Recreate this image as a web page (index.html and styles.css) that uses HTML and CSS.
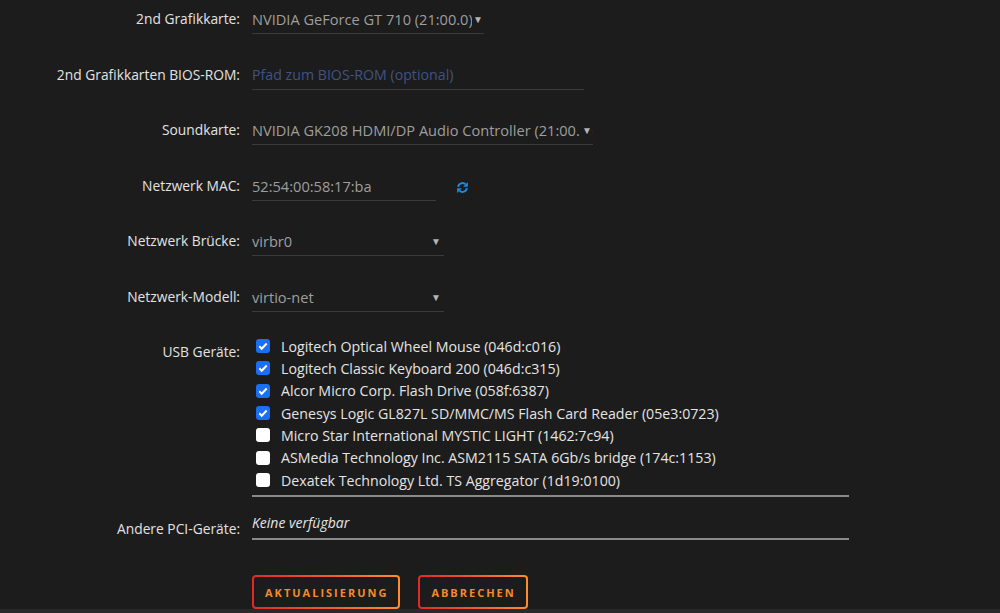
FILE: index.html
```html
<!DOCTYPE html>
<html lang="de">
<head>
<meta charset="utf-8">
<title>VM bearbeiten</title>
<link rel="stylesheet" href="styles.css">
</head>
<body>
<form class="vm-form">
  <div class="label">2nd Grafikkarte:</div>
  <div class="field select w-gpu"><span class="val">NVIDIA GeForce GT 710 (21:00.0)</span><span class="arrow">▼</span></div>

  <div class="label">2nd Grafikkarten BIOS-ROM:</div>
  <div class="field w-rom"><span class="placeholder">Pfad zum BIOS-ROM (optional)</span></div>

  <div class="label">Soundkarte:</div>
  <div class="field select w-sound"><span class="val">NVIDIA GK208 HDMI/DP Audio Controller (21:00.1)</span><span class="arrow">▼</span></div>

  <div class="label">Netzwerk MAC:</div>
  <div class="mac-row">
    <div class="field w-mac"><span class="val">52:54:00:58:17:ba</span></div>
    <svg class="refresh" viewBox="0 0 16 16" width="13" height="13" aria-hidden="true">
      <path d="M2.6 7.2A5.4 5.4 0 0 1 11.8 4.2" fill="none" stroke="#2289d8" stroke-width="2.4"/>
      <polygon points="14.6,1.2 14.6,7 8.8,7" fill="#2289d8"/>
      <path d="M13.4 8.8A5.4 5.4 0 0 1 4.2 11.8" fill="none" stroke="#2289d8" stroke-width="2.4"/>
      <polygon points="1.4,14.8 1.4,9 7.2,9" fill="#2289d8"/>
    </svg>
  </div>

  <div class="label">Netzwerk Brücke:</div>
  <div class="field select w-br"><span class="val">virbr0</span><span class="arrow">▼</span></div>

  <div class="label">Netzwerk-Modell:</div>
  <div class="field select w-br"><span class="val">virtio-net</span><span class="arrow">▼</span></div>

  <div class="label">USB Geräte:</div>
  <div class="usb-list">
    <div class="usb-item"><span class="box on"><svg viewBox="0 0 14 14" width="14" height="14"><path d="M3.3 7.3l2.4 2.4 5-5.2" fill="none" stroke="#fff" stroke-width="2"/></svg></span>Logitech Optical Wheel Mouse (046d:c016)</div>
    <div class="usb-item"><span class="box on"><svg viewBox="0 0 14 14" width="14" height="14"><path d="M3.3 7.3l2.4 2.4 5-5.2" fill="none" stroke="#fff" stroke-width="2"/></svg></span>Logitech Classic Keyboard 200 (046d:c315)</div>
    <div class="usb-item"><span class="box on"><svg viewBox="0 0 14 14" width="14" height="14"><path d="M3.3 7.3l2.4 2.4 5-5.2" fill="none" stroke="#fff" stroke-width="2"/></svg></span>Alcor Micro Corp. Flash Drive (058f:6387)</div>
    <div class="usb-item"><span class="box on"><svg viewBox="0 0 14 14" width="14" height="14"><path d="M3.3 7.3l2.4 2.4 5-5.2" fill="none" stroke="#fff" stroke-width="2"/></svg></span>Genesys Logic GL827L SD/MMC/MS Flash Card Reader (05e3:0723)</div>
    <div class="usb-item"><span class="box"></span>Micro Star International MYSTIC LIGHT (1462:7c94)</div>
    <div class="usb-item"><span class="box"></span>ASMedia Technology Inc. ASM2115 SATA 6Gb/s bridge (174c:1153)</div>
    <div class="usb-item"><span class="box"></span>Dexatek Technology Ltd. TS Aggregator (1d19:0100)</div>
  </div>

  <div class="label label-pci">Andere PCI-Geräte:</div>
  <div class="pci"><em>Keine verfügbar</em></div>

  <div class="label"></div>
  <div class="buttons">
    <button type="button" class="btn">Aktualisierung</button>
    <button type="button" class="btn">Abbrechen</button>
  </div>
</form>
<div class="footer"></div>
</body>
</html>
```

FILE: styles.css
```css
html, body {
  margin: 0;
  padding: 0;
  background: #1c1c1c;
  height: 613px;
  overflow: hidden;
}
body {
  display: flex;
  flex-direction: column;
  font-family: "Open Sans", "Noto Sans", sans-serif;
  font-size: 14px;
  color: #e0e0e0;
}
.vm-form {
  flex: 1;
  display: grid;
  grid-template-columns: 240px 597px;
  column-gap: 12px;
  align-content: start;
  padding-top: 5px;
}
.label {
  text-align: right;
  line-height: 28px;
  font-size: 13.8px;
  color: #e2e2e2;
  white-space: nowrap;
  margin-bottom: 26.5px;
}
.field {
  position: relative;
  height: 28px;
  line-height: 28px;
  border-bottom: 1px solid #3a3a3a;
  display: flex;
  align-items: center;
  color: #9e9e9e;
  font-size: 14.6px;
  white-space: nowrap;
  overflow: hidden;
  margin-bottom: 26.5px;
  justify-self: start;
}
.val {
  flex: 1;
  overflow: hidden;
}
.placeholder {
  color: #3f5384;
  font-size: 14.2px;
}
.arrow {
  position: absolute;
  right: 1px;
  top: 0;
  font-size: 10px;
  color: #b5b5b5;
  background: #1c1c1c;
  padding-left: 1px;
}
.w-gpu { width: 232px; }
.w-rom { width: 332px; }
.w-sound { width: 341px; }
.w-mac { width: 184px; margin-bottom: 0; }
.w-br { width: 192px; }
.w-br .arrow { right: 3px; }
.mac-row {
  display: flex;
  align-items: flex-start;
  gap: 20px;
  margin-bottom: 26.5px;
}
.refresh {
  margin-top: 9px;
}
.usb-list {
  margin-top: -3px;
  padding-bottom: 4px;
  border-bottom: 2px solid #8a8a8a;
  margin-bottom: 12px;
  align-self: start;
}
.usb-item {
  display: flex;
  align-items: center;
  height: 22.33px;
  font-size: 14.2px;
  color: #e4e4e4;
  white-space: nowrap;
}
.box {
  flex: none;
  width: 14px;
  height: 14px;
  margin: 0 11px 0 4px;
  border-radius: 3px;
  background: #ffffff;
  display: flex;
}
.box.on {
  background: #1a6ff2;
}
.label-pci {
  padding-top: 6px;
  margin-bottom: 0;
  align-self: start;
}
.pci {
  height: 28px;
  line-height: 28px;
  padding-bottom: 1px;
  border-bottom: 2px solid #8a8a8a;
  color: #e4e4e4;
  margin-bottom: 35px;
  align-self: start;
}
.pci em {
  font-style: italic;
}
.buttons {
  display: flex;
  gap: 18px;
}
.btn {
  height: 34px;
  padding: 0 10px 0 11px;
  border: 2px solid transparent;
  border-radius: 4px;
  background: linear-gradient(#1c1c1c, #1c1c1c) padding-box,
              linear-gradient(90deg, #e22828, #ff8c2f) border-box;
  color: #f28a30;
  font-family: "Open Sans", "Noto Sans", sans-serif;
  font-weight: 700;
  font-size: 11px;
  letter-spacing: 2px;
  text-transform: uppercase;
  cursor: pointer;
}
.footer {
  height: 4px;
  background: #2a2a2a;
  flex: none;
}
```
